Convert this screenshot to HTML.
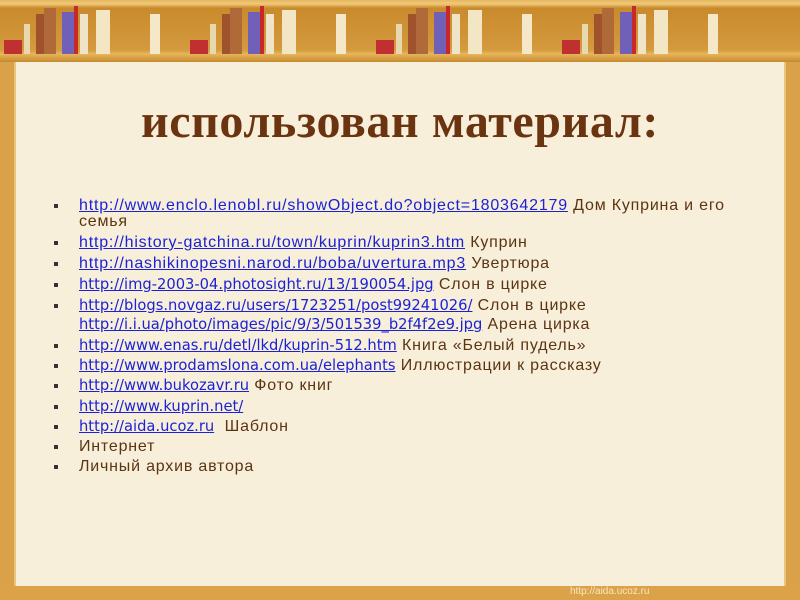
<!DOCTYPE html>
<html><head><meta charset="utf-8"><style>
*{margin:0;padding:0;box-sizing:border-box}
body{width:800px;height:600px;overflow:hidden;background:#d9a24a;position:relative;font-family:"Liberation Sans","DejaVu Sans",sans-serif}
.paper{position:absolute;left:14px;top:62px;width:772px;height:524px;background:#f8efdb;border-left:2px solid #e9c57e;border-right:2px solid #e9c57e}
.shelf{position:absolute;left:0;top:0;width:800px;height:62px;background:linear-gradient(#e8b862 0,#f0c878 4px,#c98a2c 8px,#d49a3e 50px,#e8b55a 54px,#c58a30 62px)}
.b{position:absolute;bottom:8px}
.foot{position:absolute;left:0;top:586px;width:800px;height:14px;background:#dca24a}
.foot span{position:absolute;left:570px;top:0;font-size:10px;color:#f7e6c0}
h1{position:absolute;left:0;width:800px;top:94px;text-align:center;font-family:"Liberation Serif",serif;font-weight:bold;font-size:48px;color:#6b3410;letter-spacing:0.6px}
.l{position:absolute;left:79px;font-size:16px;letter-spacing:0.8px;color:#5b3412;white-space:nowrap;line-height:17px}
.l::before{content:"";position:absolute;left:-25px;top:7px;width:4px;height:4px;background:#333}
.nb::before{display:none}
a{color:#1b22d6;text-decoration:underline}
.c{font-family:"DejaVu Sans",sans-serif;font-size:14.7px;letter-spacing:0}
</style></head><body>
<div class="shelf">
<div id="books"></div>
</div>
<div class="paper"></div>
<div class="foot"><span>http://aida.ucoz.ru</span></div>
<h1>использован материал:</h1>
<div class="l" style="top:197px"><a>http://www.enclo.lenobl.ru/showObject.do?object=1803642179</a> Дом Куприна и его</div>
<div class="l nb" style="top:213px">семья</div>
<div class="l" style="top:234px"><a>http://history-gatchina.ru/town/kuprin/kuprin3.htm</a> Куприн</div>
<div class="l" style="top:255px"><a>http://nashikinopesni.narod.ru/boba/uvertura.mp3</a> Увертюра</div>
<div class="l" style="top:276px"><a class="c">http://img-2003-04.photosight.ru/13/190054.jpg</a> Слон в цирке</div>
<div class="l" style="top:297px"><a class="c">http://blogs.novgaz.ru/users/1723251/post99241026/</a> Слон в цирке</div>
<div class="l nb" style="top:316px"><a class="c">http://i.i.ua/photo/images/pic/9/3/501539_b2f4f2e9.jpg</a> Арена цирка</div>
<div class="l" style="top:337px"><a class="c">http://www.enas.ru/detl/lkd/kuprin-512.htm</a> Книга «Белый пудель»</div>
<div class="l" style="top:357px"><a class="c">http://www.prodamslona.com.ua/elephants</a> Иллюстрации к рассказу</div>
<div class="l" style="top:377px"><a class="c">http://www.bukozavr.ru</a> Фото книг</div>
<div class="l" style="top:398px"><a class="c">http://www.kuprin.net/</a></div>
<div class="l" style="top:418px"><a class="c">http://aida.ucoz.ru</a>&nbsp; Шаблон</div>
<div class="l" style="top:438px">Интернет</div>
<div class="l" style="top:458px">Личный архив автора</div>
<script>
var h='',cols=[['#a0522d',10,40],['#b06a3a',12,46],['#7060b8',12,42],['#c8282a',4,48],['#f0e4c8',8,40],['#f2e6c4',14,44],['#c03030',18,14],['#e8d8b0',6,30]];
var xs=[[36,0],[44,1],[62,2],[74,3],[80,4],[96,5],[0,6],[24,7]];
for(var k=0;k<4;k++){var o=k*186;
xs.forEach(function(p){var c=cols[p[1]];h+='<div class="b" style="left:'+(o+p[0]+ (p[1]==6?4:0))+'px;width:'+c[1]+'px;height:'+c[2]+'px;background:'+c[0]+'"></div>';});
h+='<div class="b" style="left:'+(o+150)+'px;width:10px;height:40px;background:#f4e8c8"></div>';}
document.getElementById('books').innerHTML=h;
</script>
</body></html>
